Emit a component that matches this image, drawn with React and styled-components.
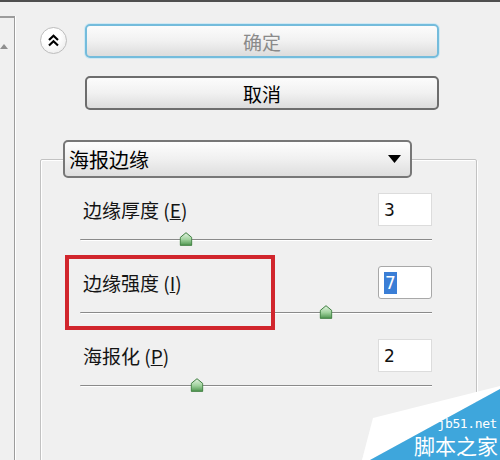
import React from "react";
import styled, { createGlobalStyle } from "styled-components";

const GlobalStyle = createGlobalStyle`
  body {
    margin: 0;
    background: #f0f0f0;
    font-family: "Noto Sans CJK SC", "Noto Sans", sans-serif;
  }
`;

const Frame = styled.div`
  position: relative;
  width: 500px;
  height: 460px;
  overflow: hidden;
  box-sizing: border-box;
  background: #f0f0f0;
  border-top: 2px solid #4f4f4f;
  display: flex;
`;

const LeftStrip = styled.div`
  width: 14px;
  margin-top: 14px;
  padding-top: 12px;
  border-top: 2px solid #9c9c9c;
  border-right: 1px solid #9c9c9c;
  box-shadow: 1px 0 0 #fff;
`;

const Main = styled.div`
  padding: 22px 0 0 25px;
`;

const TopRow = styled.div`
  display: flex;
  align-items: flex-start;
  gap: 18px;
`;

const RoundButton = styled.div`
  width: 27px;
  height: 27px;
  margin-top: 3px;
  box-sizing: border-box;
  border-radius: 50%;
  border: 1px solid #bdbdbd;
  background: radial-gradient(circle at 40% 35%, #ffffff 40%, #e4e4e4);
  display: flex;
  align-items: center;
  justify-content: center;
`;

const ButtonStack = styled.div`
  display: flex;
  flex-direction: column;
  gap: 18px;
  width: 354px;
`;

const PushButton = styled.div`
  height: 34px;
  box-sizing: border-box;
  border-radius: 5px;
  border: 2px solid ${(p) => (p.$default ? "#74bcdc" : "#6d6d6d")};
  box-shadow: ${(p) => (p.$default ? "0 0 0 1px #cfe9f4" : "none")};
  background: linear-gradient(#fcfcfc, #f1f1f1 50%, #dcdcdc);
  display: flex;
  align-items: center;
  justify-content: center;
  font-size: 19px;
  color: ${(p) => (p.$disabled ? "#8a8a8a" : "#000")};
`;

const Group = styled.fieldset`
  margin: 30px 0 0;
  padding: 15px 44px 80px 39px;
  width: 437px;
  min-width: 0;
  box-sizing: border-box;
  border: 1px solid #c2c2c2;
  border-radius: 2px;
  box-shadow: inset 1px 1px 0 #fff, 1px 1px 0 #fff;
`;

const Legend = styled.legend`
  margin-left: -17px;
  padding: 0;
`;

const Select = styled.div`
  width: 349px;
  height: 38px;
  box-sizing: border-box;
  border: 2px solid #777;
  border-radius: 5px;
  background: linear-gradient(#fdfdfd, #f0f0f0 50%, #dedede);
  display: flex;
  align-items: center;
  justify-content: space-between;
  padding: 0 9px 0 4px;
  font-size: 20px;
  color: #000;
`;

const Row = styled.div`
  position: relative;
  display: flex;
  flex-direction: column;
  height: 73px;
`;

const RowHeader = styled.div`
  display: flex;
  align-items: center;
  justify-content: space-between;
  height: 33px;
`;

const Label = styled.span`
  padding-left: 3px;
  font-size: 19px;
  color: #141414;

  u {
    text-decoration-thickness: 1px;
  }
`;

const NumberBox = styled.div`
  width: 54px;
  height: 33px;
  box-sizing: border-box;
  background: #fff;
  border: 1px solid ${(p) => (p.$focused ? "#a8a8a8" : "#dcdcdc")};
  border-radius: ${(p) => (p.$focused ? "3px" : "0")};
  padding-left: 5px;
  display: flex;
  align-items: center;
  font-family: "DejaVu Sans", sans-serif;
  font-size: 17px;
  color: #111;
`;

const Selected = styled.span`
  background: #3a7ed6;
  color: #fff;
  padding: 1px 1px;
  line-height: 20px;
`;

const SliderArea = styled.div`
  position: relative;
  height: 40px;
`;

const Track = styled.div`
  margin-top: 13px;
  height: 1px;
  background: #8a8a8a;
  border-bottom: 1px solid #fff;
  border-radius: 1px 0 0 1px;
`;

const Thumb = styled.svg`
  position: absolute;
  top: 6px;
  transform: translateX(-50%);
`;

const Highlight = styled.div`
  position: absolute;
  top: -11px;
  left: -15px;
  width: 210px;
  height: 75px;
  box-sizing: border-box;
  border: 4px solid #d1262d;
  pointer-events: none;
`;

const Watermark = styled.div`
  position: absolute;
  right: 0;
  bottom: 0;
  width: 140px;
  height: 74px;
  padding-bottom: 4px;
  box-sizing: border-box;
  display: flex;
  flex-direction: column;
  align-items: flex-end;
  justify-content: flex-end;
  gap: 3px;
  color: #fff;
`;

const MarkShape = styled.svg`
  position: absolute;
  inset: 0;
`;

const MarkUrl = styled.span`
  position: relative;
  font-family: "DejaVu Sans Mono", monospace;
  font-size: 13px;
  letter-spacing: -0.4px;
  line-height: 14px;
  padding-right: 3px;
`;

const MarkName = styled.span`
  position: relative;
  font-size: 21px;
  line-height: 22px;
  padding-right: 2px;
`;

const sliders = [
  { name: "边缘厚度", key: "E", value: 3, max: 10 },
  { name: "边缘强度", key: "I", value: 7, max: 10, focused: true },
  { name: "海报化", key: "P", value: 2, max: 6 },
];

function ChevronsUp() {
  return (
    <svg width="13" height="13" viewBox="0 0 13 13">
      <polyline points="2,6 6.5,1.8 11,6" fill="none" stroke="#000" strokeWidth="2.2" />
      <polyline points="2,11.5 6.5,7.3 11,11.5" fill="none" stroke="#000" strokeWidth="2.2" />
    </svg>
  );
}

function SliderThumb({ left }) {
  return (
    <Thumb width="13" height="14" viewBox="0 0 13 14" style={{ left }}>
      <defs>
        <linearGradient id="thumbFill" x1="0" y1="0" x2="0" y2="1">
          <stop offset="0" stopColor="#e4f4e2" />
          <stop offset="0.55" stopColor="#9fd19c" />
          <stop offset="1" stopColor="#4f9650" />
        </linearGradient>
      </defs>
      <polygon points="6.5,0.7 12.3,5.5 12.3,13.3 0.7,13.3 0.7,5.5" fill="url(#thumbFill)" stroke="#3c7d3e" strokeWidth="1" />
    </Thumb>
  );
}

function App() {
  return (
    <>
      <GlobalStyle />
      <Frame>
        <LeftStrip>
          <svg width="8" height="6" viewBox="0 0 8 6">
            <polygon points="0,6 4,1 8,6" fill="#8f8f8f" />
          </svg>
        </LeftStrip>
        <Main>
          <TopRow>
            <RoundButton>
              <ChevronsUp />
            </RoundButton>
            <ButtonStack>
              <PushButton $default $disabled>确定</PushButton>
              <PushButton>取消</PushButton>
            </ButtonStack>
          </TopRow>

          <Group>
            <Legend>
              <Select>
                <span>海报边缘</span>
                <svg width="13" height="8" viewBox="0 0 13 8">
                  <polygon points="0,0 13,0 6.5,8" fill="#000" />
                </svg>
              </Select>
            </Legend>

            {sliders.map((s) => (
              <Row key={s.key}>
                <RowHeader>
                  <Label>
                    {s.name} (<u>{s.key}</u>)
                  </Label>
                  <NumberBox $focused={s.focused}>
                    {s.focused ? <Selected>{s.value}</Selected> : s.value}
                  </NumberBox>
                </RowHeader>
                <SliderArea>
                  <Track />
                  <SliderThumb left={`${(s.value / s.max) * 100}%`} />
                </SliderArea>
                {s.focused && <Highlight />}
              </Row>
            ))}
          </Group>
        </Main>

        <Watermark>
          <MarkShape width="140" height="74" viewBox="0 0 140 74">
            <polygon points="2,74 13,32 140,0 140,3 10,74" fill="#ffffff" />
            <polygon points="10,74 140,3 140,74" fill="#3ea6dc" />
          </MarkShape>
          <MarkUrl>jb51.net</MarkUrl>
          <MarkName>脚本之家</MarkName>
        </Watermark>
      </Frame>
    </>
  );
}

export default App;
